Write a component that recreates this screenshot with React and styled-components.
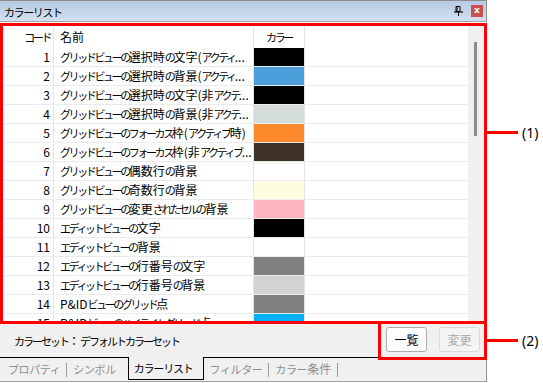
import React from 'react'
import styled, { createGlobalStyle } from 'styled-components'

const GlobalStyle = createGlobalStyle`
  html, body { margin: 0; padding: 0; background: #fff; }
  body {
    font-family: "Noto Sans CJK JP", "Noto Sans", sans-serif;
    font-size: 12px;
    color: #000;
  }
`

const Kana = styled.span`
  font-size: 11px;
  letter-spacing: var(--kana-ls, -2.4px);
`
const KANA = /([\u3040-\u30ff]+)/
const JText = ({ children }) =>
  children.split(KANA).map((part, i) => (i % 2 ? <Kana key={i}>{part}</Kana> : part))

const Page = styled.div`
  position: relative;
  width: 543px;
  height: 383px;
  display: flex;
`
const Window = styled.div`
  width: 487px;
  height: 382px;
  display: flex;
  flex-direction: column;
`
const TitleBar = styled.div`
  height: 22px;
  box-sizing: border-box;
  border-top: 1px solid #8c8c8c;
  border-bottom: 1px solid #a6a6a6;
  border-right: 1px solid #8c8c8c;
  background: linear-gradient(#b6cae3, #d3e0ef);
  display: flex;
  align-items: center;
  padding: 0 3px 0 4px;
`
const Title = styled.div`
  flex: 1;
  --kana-ls: -1.4px;
`
const PinIcon = styled.svg`
  width: 9px;
  height: 10px;
  margin-right: 8px;
`
const CloseButton = styled.div`
  width: 12px;
  height: 12px;
  background: #c9504f;
  color: #fff;
  font-family: "DejaVu Sans", sans-serif;
  font-weight: bold;
  font-size: 9px;
  line-height: 11px;
  text-align: center;
`
const GridPanel = styled.div`
  margin-top: 1px;
  height: 301px;
  box-sizing: border-box;
  border: 3px solid #ff0000;
  display: flex;
  background: #fff;
`
const Table = styled.div`
  flex: 1;
  overflow: hidden;
`
const HeaderRow = styled.div`
  height: 22px;
  display: flex;
`
const Row = styled.div`
  height: 19px;
  box-sizing: border-box;
  border-bottom: 1px solid #ebebeb;
  display: flex;
`
const CodeCell = styled.div`
  width: 51px;
  flex: none;
  box-sizing: border-box;
  border-right: 1px solid #e4e4e4;
  text-align: right;
  padding-right: 3px;
  line-height: ${p => (p.$head ? '22px' : '18px')};
`
const NameCell = styled.div`
  width: 200px;
  flex: none;
  box-sizing: border-box;
  border-right: 1px solid #e4e4e4;
  padding: 0 0 0 6px;
  white-space: nowrap;
  overflow: hidden;
  line-height: ${p => (p.$head ? '22px' : '18px')};
`
const ColorCell = styled.div`
  width: 51px;
  flex: none;
  box-sizing: border-box;
  border-right: 1px solid #e4e4e4;
  background: ${p => p.$color || '#fff'};
  text-align: center;
  line-height: 22px;
`
const Filler = styled.div`
  flex: 1;
`
const Scrollbar = styled.div`
  width: 16px;
  flex: none;
  background: #f0f0f0;
  padding-top: 16px;
  box-sizing: border-box;
`
const Thumb = styled.div`
  width: 3px;
  height: 94px;
  margin-left: 6px;
  background: #8c8c8c;
`
const StatusBar = styled.div`
  height: 33px;
  display: flex;
  align-items: center;
  background: #f0f0f0;
`
const StatusText = styled.div`
  padding-left: 14px;
  flex: 1;
  --kana-ls: -2px;
`
const ButtonBox = styled.div`
  position: relative;
  z-index: 1;
  width: 109px;
  height: 39px;
  margin: -3px 0;
  box-sizing: border-box;
  border: 3px solid #ff0000;
  display: flex;
  align-items: flex-start;
  gap: 12px;
  padding: 3px 0 0 5px;
`
const Button = styled.button`
  width: 41px;
  height: 25px;
  box-sizing: border-box;
  border: 1px solid ${p => (p.disabled ? '#dadada' : '#adadad')};
  border-radius: 3px;
  background: ${p => (p.disabled ? '#f4f4f4' : '#fdfdfd')};
  color: ${p => (p.disabled ? '#a8a8a8' : '#000')};
  font-family: inherit;
  font-size: 12px;
  padding: 0;
`
const TabStrip = styled.div`
  height: 25px;
  box-sizing: border-box;
  border-top: 1px solid #000;
  border-bottom: 1px solid #a0a0a0;
  border-right: 1px solid #8c8c8c;
  background: #f0f0f0;
  display: flex;
  align-items: flex-start;
  padding-left: 2px;
  --kana-ls: -0.4px;
`
const Tab = styled.div`
  height: 23px;
  line-height: 22px;
  padding: 0 6px;
  color: #8e8e8e;
`
const ActiveTab = styled.div`
  margin: -1px 0 0 6px;
  height: 23px;
  line-height: 22px;
  box-sizing: border-box;
  border: 1px solid #000;
  border-top: none;
  background: #f0f0f0;
  padding: 0 10px 0 5px;
  color: #000;
  --kana-ls: -1.2px;
`
const TabSep = styled.div`
  width: 1px;
  height: 14px;
  margin-top: 5px;
  background: #9a9a9a;
`
const Callout = styled.div`
  position: absolute;
  left: 486px;
  top: ${p => p.$top}px;
  display: flex;
  align-items: center;
  height: 18px;
`
const CalloutLine = styled.div`
  width: 32px;
  height: 3px;
  background: #ff0000;
`
const CalloutLabel = styled.div`
  margin-left: 4px;
  font-family: "Noto Sans", sans-serif;
  font-size: 14px;
`

const rows = [
  ['1', 'グリッドビューの選択時の文字(アクティ...', '#000000'],
  ['2', 'グリッドビューの選択時の背景(アクティ...', '#4a9fdb'],
  ['3', 'グリッドビューの選択時の文字(非アクテ...', '#000000'],
  ['4', 'グリッドビューの選択時の背景(非アクテ...', '#d3dbdb'],
  ['5', 'グリッドビューのフォーカス枠(アクティブ時)', '#ff8a2c'],
  ['6', 'グリッドビューのフォーカス枠(非アクティブ...', '#3f3226'],
  ['7', 'グリッドビューの偶数行の背景', '#ffffff'],
  ['8', 'グリッドビューの奇数行の背景', '#fffde0'],
  ['9', 'グリッドビューの変更されたセルの背景', '#ffb6c1'],
  ['10', 'エディットビューの文字', '#000000'],
  ['11', 'エディットビューの背景', '#ffffff'],
  ['12', 'エディットビューの行番号の文字', '#808080'],
  ['13', 'エディットビューの行番号の背景', '#d3d3d3'],
  ['14', 'P&IDビューのグリッド点', '#808080'],
  ['15', 'P&IDビューのハイライトグリッド点', '#00b0f0'],
]

const tabs = [
  { label: 'プロパティ', sep: true },
  { label: 'シンボル' },
  { label: 'カラーリスト', active: true },
  { label: 'フィルター', sep: true },
  { label: 'カラー条件', sep: true },
]

const App = () => {
  return (
    <Page>
      <GlobalStyle />
      <Window>
        <TitleBar>
          <Title><JText>カラーリスト</JText></Title>
          <PinIcon viewBox="0 0 9 10">
            <path d="M2 0.5h4v5h-4z M3 0.5v5" fill="none" stroke="#000" strokeWidth="1" />
            <path d="M0 6h9" stroke="#000" strokeWidth="1.2" />
            <path d="M4.5 6v4" stroke="#000" strokeWidth="1" />
          </PinIcon>
          <CloseButton>x</CloseButton>
        </TitleBar>
        <GridPanel>
          <Table>
            <HeaderRow>
              <CodeCell $head><JText>コード</JText></CodeCell>
              <NameCell $head>名前</NameCell>
              <ColorCell><JText>カラー</JText></ColorCell>
              <Filler />
            </HeaderRow>
            {rows.map(([code, name, color]) => (
              <Row key={code}>
                <CodeCell>{code}</CodeCell>
                <NameCell><JText>{name}</JText></NameCell>
                <ColorCell $color={color} />
                <Filler />
              </Row>
            ))}
          </Table>
          <Scrollbar>
            <Thumb />
          </Scrollbar>
        </GridPanel>
        <StatusBar>
          <StatusText><JText>カラーセット：デフォルトカラーセット</JText></StatusText>
          <ButtonBox>
            <Button>一覧</Button>
            <Button disabled>変更</Button>
          </ButtonBox>
        </StatusBar>
        <TabStrip>
          {tabs.map(t => (
            <React.Fragment key={t.label}>
              {t.active
                ? <ActiveTab><JText>{t.label}</JText></ActiveTab>
                : <Tab><JText>{t.label}</JText></Tab>}
              {t.sep && <TabSep />}
            </React.Fragment>
          ))}
        </TabStrip>
      </Window>
      <Callout $top={123}>
        <CalloutLine />
        <CalloutLabel>(1)</CalloutLabel>
      </Callout>
      <Callout $top={331}>
        <CalloutLine />
        <CalloutLabel>(2)</CalloutLabel>
      </Callout>
    </Page>
  )
}

export default App
